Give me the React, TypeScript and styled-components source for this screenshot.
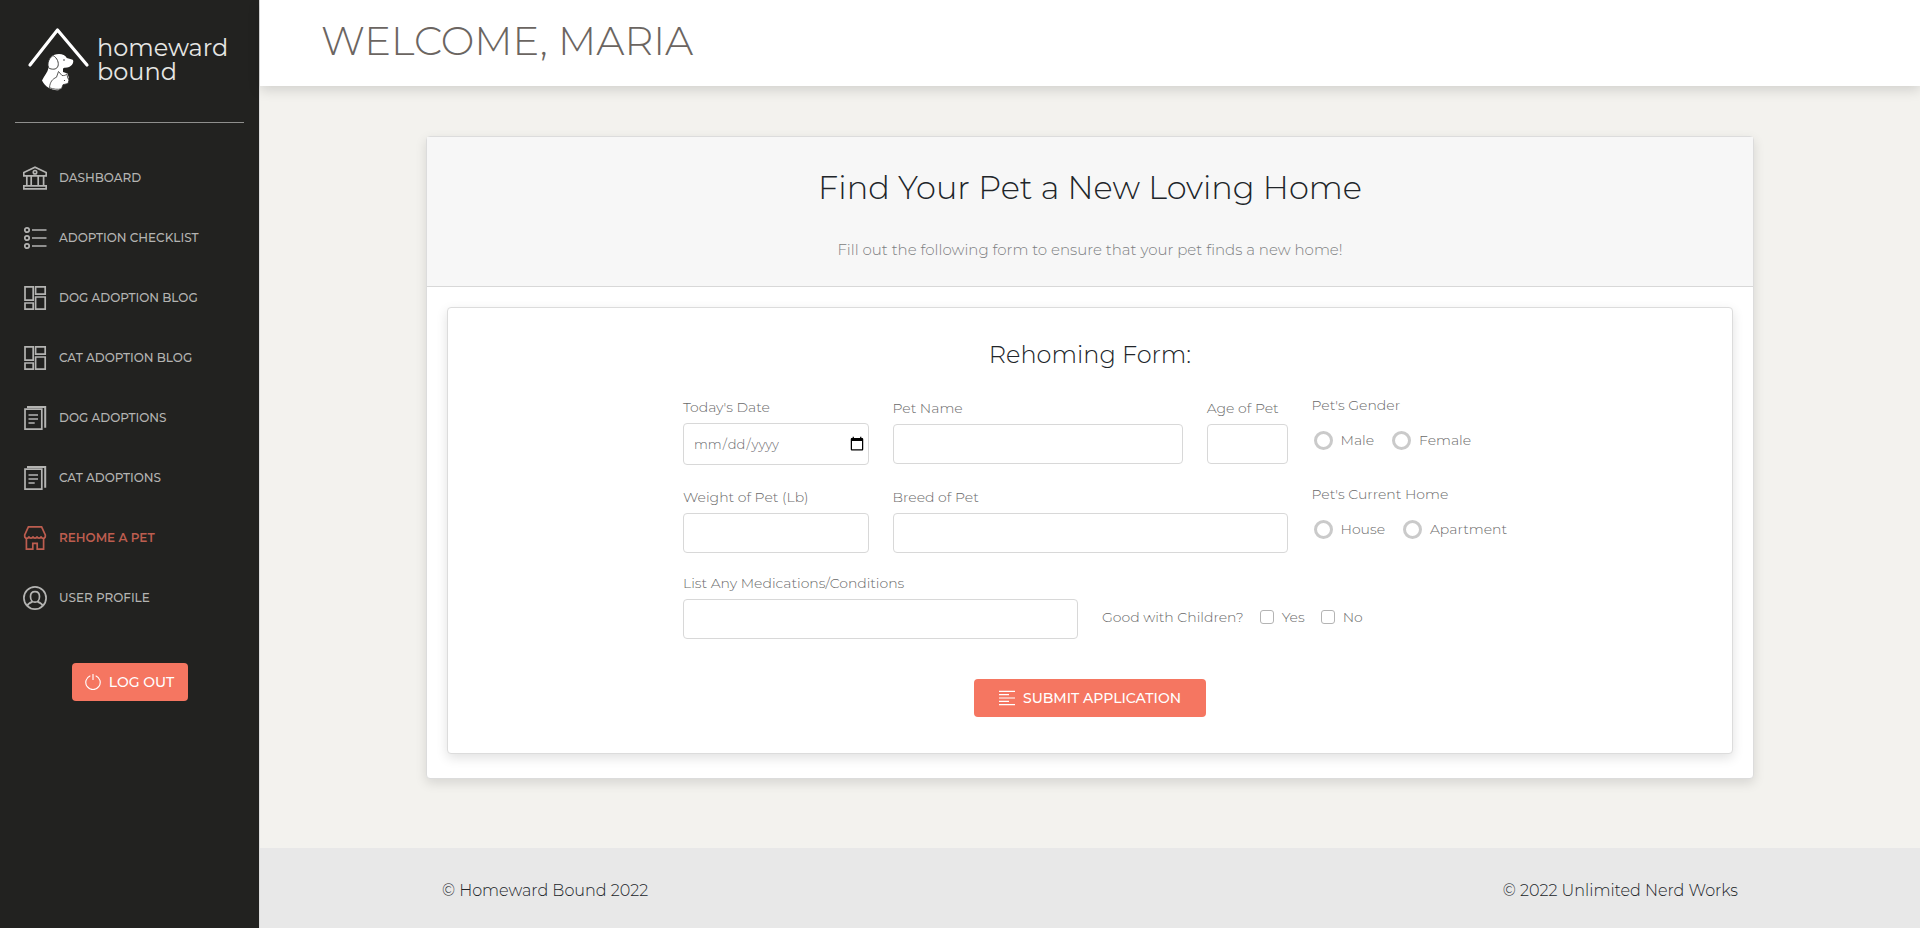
import React from "react";
import styled, { createGlobalStyle } from "styled-components";

const GlobalStyle = createGlobalStyle`
  *, *::before, *::after { box-sizing: border-box; }
  body {
    margin: 0;
    background: #f3f2ee;
    color: #212529;
    font-family: Montserrat, Inter, "Liberation Sans", sans-serif;
    font-size: 16px;
    line-height: 24px;
  }
`;

const Shell = styled.div`
  display: flex;
  min-height: 100vh;
`;

const Sidebar = styled.aside`
  flex: 0 0 260px;
  min-width: 0;
  padding: 0 15px;
  background: #222220;
  border-right: 1px solid #dddddd;
`;

const Brand = styled.a`
  display: flex;
  align-items: center;
  gap: 6px;
  height: 123px;
  padding: 0 0 4px 12px;
  border-bottom: 1px solid #8f8f8d;
  color: #e6e6e4;
  text-decoration: none;
`;

const BrandName = styled.span`
  padding-top: 2px;
  font-size: 24px;
  font-weight: 400;
  line-height: 24px;
`;

const NavList = styled.ul`
  display: flex;
  flex-direction: column;
  margin: 0;
  padding: 25px 0 0;
  list-style: none;
`;

const NavLink = styled.a<{ $active?: boolean }>`
  display: flex;
  align-items: center;
  gap: 12px;
  height: 60px;
  padding-left: 8px;
  color: ${(p) => (p.$active ? "#bd5d4f" : "#b4b4b2")};
  font-size: 12px;
  font-weight: ${(p) => (p.$active ? 600 : 500)};
  text-decoration: none;
  text-transform: uppercase;
`;

const Button = styled.button<{ $wide?: boolean }>`
  display: flex;
  align-items: center;
  justify-content: center;
  gap: 8px;
  width: ${(p) => (p.$wide ? "232px" : "116px")};
  height: 38px;
  margin: ${(p) => (p.$wide ? "40px auto 0" : "35px auto 0")};
  padding: 0;
  border: 0;
  border-radius: 4px;
  background: #f57661;
  color: #ffffff;
  font-family: inherit;
  font-size: 14px;
  font-weight: 500;
  white-space: nowrap;
`;

const Content = styled.div`
  display: flex;
  flex: 1;
  flex-direction: column;
  min-width: 0;
`;

const TopBar = styled.header`
  padding: 17px 61px 21px;
  background: #ffffff;
  box-shadow: 0 4px 12px rgba(0, 0, 0, 0.14);
`;

const PageTitle = styled.h1`
  margin: 0;
  color: #6b6561;
  font-size: 40px;
  font-weight: 300;
  line-height: 48px;
  text-transform: uppercase;
`;

const Main = styled.main`
  flex: 1;
  padding: 50px 10% 69px;
`;

const Card = styled.section`
  background: #ffffff;
  border: 1px solid #dcdcdc;
  border-radius: 4px;
  box-shadow: 0 4px 12px rgba(0, 0, 0, 0.12);
`;

const CardHeader = styled.header`
  padding: 32px 20px 24px;
  border-bottom: 1px solid #d8d8d8;
  background: #f7f7f7;
  text-align: center;
`;

const CardTitle = styled.h2`
  margin: 0;
  font-size: 32px;
  font-weight: 300;
  line-height: 38px;
`;

const CardText = styled.p`
  margin: 31px 0 0;
  color: #7c7e81;
  font-size: 15px;
  font-weight: 300;
`;

const CardBody = styled.div`
  padding: 20px 20px 24px;
`;

const FormCard = styled(Card)`
  padding: 32px 16px 36px;
`;

const FormTitle = styled.h3`
  margin: 0 0 25px;
  font-size: 24px;
  font-weight: 300;
  line-height: 30px;
  text-align: center;
`;

const FormGrid = styled.div`
  display: grid;
  grid-template-columns: repeat(8, 1fr);
  row-gap: 17px;
  align-items: center;
  max-width: 838px;
  margin: 0 auto;
  color: #6a6a6a;
  font-size: 14px;
  font-weight: 300;
  line-height: 20px;
`;

const Field = styled.div<{ $span: number }>`
  display: flex;
  flex-direction: column;
  gap: 6px;
  grid-column: span ${(p) => p.$span};
  padding: 0 12px;
`;

const Input = styled.input`
  width: 100%;
  height: ${(p) => (p.type === "date" ? "42px" : "40px")};
  padding: 0 3px 0 9px;
  border: 1px solid #d8d8d8;
  border-radius: 4px;
  background: #ffffff;
  color: #6a6a6e;
  font-family: inherit;
  font-size: 13px;
  font-weight: 300;

  &::-webkit-calendar-picker-indicator {
    width: 16px;
    height: 16px;
    padding: 0;
  }
`;

const RadioGroup = styled.fieldset`
  grid-column: span 2;
  min-width: 0;
  margin: 0;
  padding: 0 0 15px 12px;
  border: 0;
`;

const GroupLabel = styled.legend`
  padding: 0;
  margin-bottom: 13px;
`;

const Options = styled.div`
  display: flex;
  gap: 18px;
  height: 24px;
  padding-left: 2px;
`;

const Option = styled.label`
  display: flex;
  align-items: center;
  gap: 8px;
  white-space: nowrap;
`;

const Radio = styled.input`
  appearance: none;
  width: 19px;
  height: 19px;
  margin: 0;
  border: 3px solid #cacaca;
  border-radius: 50%;
  background: #ffffff;
  &:checked { background: #f57661; }
`;

const CheckGroup = styled.div`
  display: flex;
  grid-column: span 4;
  align-items: center;
  align-self: end;
  gap: 16px;
  height: 44px;
  padding: 0 12px;
`;

const Checkbox = styled.input`
  appearance: none;
  width: 14px;
  height: 14px;
  margin: 0;
  border: 1px solid #b4b4b4;
  border-radius: 3px;
  background: #ffffff;
  &:checked { background: #f57661; }
`;

const Footer = styled.footer`
  display: flex;
  justify-content: space-between;
  padding: 31px calc(10% + 16px) 25px;
  background: #e8e8e8;
  font-weight: 300;
`;

const Icon = ({ size = 24, children }: { size?: number; children: React.ReactNode }) => (
  <svg width={size} height={size} viewBox="0 0 24 24" fill="none" stroke="currentColor" strokeWidth="1.7" aria-hidden="true">
    {children}
  </svg>
);

const BankIcon = () => (
  <Icon>
    <path d="M.8 9.8V6.6L12 1.2l11.2 5.4v3.2zM.8 22.8v-3h22.4v3zM3.8 10v9.5M8.2 10v9.5M15.2 10v9.5M20.6 10v9.5" />
    <circle cx="12" cy="6.2" r="1.7" />
  </Icon>
);

const ListIcon = () => (
  <Icon>
    <circle cx="4" cy="4" r="2.2" />
    <circle cx="4" cy="12" r="2.2" />
    <circle cx="4" cy="20" r="2.2" />
    <path d="M9 4h14.5M9 12h14.5M9 20h14.5" />
  </Icon>
);

const QuiltIcon = () => (
  <Icon>
    <path d="M2 .9h8.2v13.2H2zM12.6.9h9.6v7.2h-9.6zM2 17h8.2v6.2H2zM12.6 11h9.6v12.2h-9.6z" />
  </Icon>
);

const PagesIcon = () => (
  <Icon>
    <path d="M2 3.2h16.8v20H2z" />
    <path d="M4 1h18.2v20.8" strokeWidth="2" />
    <path d="M5.5 9h9.5M5.5 13h9.5M5.5 17h6.2" />
  </Icon>
);

const ShopIcon = () => (
  <Icon>
    <path d="M5.4.9h13.2l3.7 8v1.4c0 2.6-3.9 2.6-4.2 0-.3 2.4-3.8 2.4-4.1 0-.3 2.4-3.7 2.4-4 0-.3 2.4-3.8 2.4-4.1 0-.3 2.6-4.2 2.6-4.2 0V8.900z" />
    <path d="M3.400 12v11.200h6.400v-5.800h4.400v5.800h6.400V12" />
  </Icon>
);

const UserIcon = () => (
  <Icon>
    <circle cx="12" cy="12" r="11.1" />
    <path d="M12 5.600c-2.900 0-4.500 2-4.500 4.800 0 3.200 1.800 5.800 4.500 5.800s4.500-2.600 4.500-5.800c0-2.800-1.600-4.800-4.500-4.800zM4.200 19.900c.8-2 2.800-3.200 5-4M19.800 19.900c-.8-2-2.800-3.200-5-4" />
  </Icon>
);

const PowerIcon = () => (
  <Icon size={16}>
    <path d="M8 2.500a10.800 10.800 0 1 0 8 0M12 0v9" />
  </Icon>
);

const LinesIcon = () => (
  <Icon size={16}>
    <path d="M0 2h24M0 7h15M0 12h24M0 17h15M0 22h24" />
  </Icon>
);

const LogoMark = () => (
  <svg width="64" height="66" viewBox="0 0 64 66" aria-hidden="true">
    <path d="M3 39 30.500 4 60 39" fill="none" stroke="#fff" strokeWidth="3.200" strokeLinecap="round" strokeLinejoin="round" />
    <path d="M21.500 38.500c0-6.500 4-10.500 10.500-10.500 3.500 0 6.500 1.500 7.800 4l5.200 1.500c2 .7 1.500 3.500-.2 5.500-1.300 1.600-3.500 2.700-6.800 2.700-1 0-2 .5-2 1.300v3l4.500 1.500 1.300 4-2 4.500-5 .5-2.800 7.500c-5.500 1-13.500-2-17-9.500 2.500-5 5.500-8 6.500-12.500z" fill="#fff" />
    <path d="M31.500 45.500l3.500 4c2 .2 3.500 0 4.800-1.500l1 4 1.200 2-1 3.500-5 1.200-1.500 4c-3 1.200-8.500.5-12-1 .5-6 3-8.700 7-10.500z" fill="#fff" stroke="#30302e" strokeWidth=".8" strokeLinejoin="round" />
    <path d="M26 29.500c-5 3-6.500 10.500-3.500 13 4.500 1.500 7.500.5 8.500-2.500 1-3-.5-8-5-10.500z" fill="#fff" stroke="#30302e" strokeWidth=".9" />
    <circle cx="37" cy="34" r=".8" fill="#30302e" />
    <circle cx="37.500" cy="54.500" r=".6" fill="#30302e" />
  </svg>
);

const navItems = [
  { label: "Dashboard", icon: <BankIcon /> },
  { label: "Adoption Checklist", icon: <ListIcon /> },
  { label: "Dog Adoption Blog", icon: <QuiltIcon /> },
  { label: "Cat Adoption Blog", icon: <QuiltIcon /> },
  { label: "Dog Adoptions", icon: <PagesIcon /> },
  { label: "Cat Adoptions", icon: <PagesIcon /> },
  { label: "Rehome a Pet", icon: <ShopIcon />, active: true },
  { label: "User Profile", icon: <UserIcon /> },
];

function TextField({ id, label, span, type = "text" }: { id: string; label: string; span: number; type?: string }) {
  return (
    <Field $span={span}>
      <label htmlFor={id}>{label}</label>
      <Input id={id} name={id} type={type} />
    </Field>
  );
}

function RadioField({ name, label, options }: { name: string; label: string; options: string[] }) {
  return (
    <RadioGroup>
      <GroupLabel>{label}</GroupLabel>
      <Options>
        {options.map((option) => (
          <Option key={option}>
            <Radio type="radio" name={name} value={option} />
            {option}
          </Option>
        ))}
      </Options>
    </RadioGroup>
  );
}

export default function App() {
  return (
    <>
      <GlobalStyle />
      <Shell>
        <Sidebar>
          <Brand href="#">
            <LogoMark />
            <BrandName>
              homeward
              <br />
              bound
            </BrandName>
          </Brand>
          <nav>
            <NavList>
              {navItems.map((item) => (
                <li key={item.label}>
                  <NavLink href="#" $active={item.active} aria-current={item.active ? "page" : undefined}>
                    {item.icon}
                    {item.label}
                  </NavLink>
                </li>
              ))}
            </NavList>
          </nav>
          <Button type="button">
            <PowerIcon />
            LOG OUT
          </Button>
        </Sidebar>
        <Content>
          <TopBar>
            <PageTitle>Welcome, Maria</PageTitle>
          </TopBar>
          <Main>
            <Card>
              <CardHeader>
                <CardTitle>Find Your Pet a New Loving Home</CardTitle>
                <CardText>Fill out the following form to ensure that your pet finds a new home!</CardText>
              </CardHeader>
              <CardBody>
                <FormCard as="form">
                  <FormTitle>Rehoming Form:</FormTitle>
                  <FormGrid>
                    <TextField id="date" label="Today's Date" span={2} type="date" />
                    <TextField id="pet-name" label="Pet Name" span={3} />
                    <TextField id="age" label="Age of Pet" span={1} />
                    <RadioField name="gender" label="Pet's Gender" options={["Male", "Female"]} />
                    <TextField id="weight" label="Weight of Pet (Lb)" span={2} />
                    <TextField id="breed" label="Breed of Pet" span={4} />
                    <RadioField name="home" label="Pet's Current Home" options={["House", "Apartment"]} />
                    <TextField id="conditions" label="List Any Medications/Conditions" span={4} />
                    <CheckGroup role="group" aria-labelledby="children-label">
                      <span id="children-label">Good with Children?</span>
                      <Option>
                        <Checkbox type="checkbox" name="children-yes" />
                        Yes
                      </Option>
                      <Option>
                        <Checkbox type="checkbox" name="children-no" />
                        No
                      </Option>
                    </CheckGroup>
                  </FormGrid>
                  <Button type="submit" $wide>
                    <LinesIcon />
                    SUBMIT APPLICATION
                  </Button>
                </FormCard>
              </CardBody>
            </Card>
          </Main>
          <Footer>
            <span>© Homeward Bound 2022</span>
            <span>© 2022 Unlimited Nerd Works</span>
          </Footer>
        </Content>
      </Shell>
    </>
  );
}
